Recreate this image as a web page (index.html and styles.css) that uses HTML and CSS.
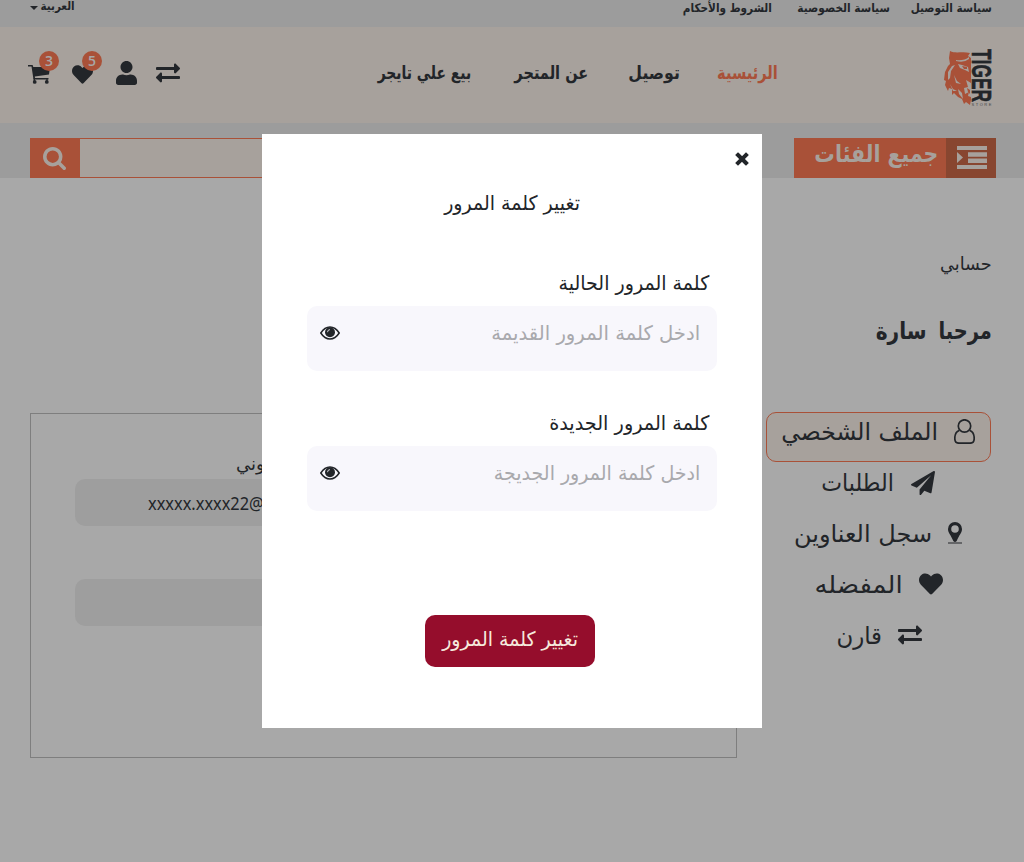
FILE: index.html
```html
<!DOCTYPE html>
<html lang="ar" dir="rtl">
<head>
<meta charset="utf-8">
<title>Tiger Store</title>
<link rel="stylesheet" href="styles.css">
</head>
<body>
<svg class="defs" aria-hidden="true">
  <symbol id="exchange" viewBox="0 0 512 512"><path d="M0 168v-16c0-13.255 10.745-24 24-24h360V80c0-21.367 25.899-32.042 40.971-16.971l80 80c9.372 9.373 9.372 24.569 0 33.941l-80 80C409.956 271.982 384 261.456 384 240v-48H24c-13.255 0-24-10.745-24-24zm488 152H128v-48c0-21.314-25.862-32.08-40.971-16.971l-80 80c-9.372 9.373-9.372 24.569 0 33.941l80 80C102.057 463.997 128 453.437 128 432v-48h360c13.255 0 24-10.745 24-24v-16c0-13.255-10.745-24-24-24z"/></symbol>
  <symbol id="heart" viewBox="0 0 512 512"><path d="M462.3 62.6C407.5 15.9 326 24.3 275.7 76.2L256 96.5l-19.7-20.3C186.1 24.3 104.5 15.9 49.7 62.6c-62.8 53.6-66.1 149.8-9.9 207.9l193.5 199.8c12.5 12.9 32.8 12.9 45.3 0l193.5-199.8c56.3-58.1 53-154.3-9.8-207.9z"/></symbol>
  <symbol id="eye" viewBox="0 0 20 14"><path d="M.8 7Q4.600 1 10 1T19.200 7Q15.400 13 10 13T.8 7Z" fill="none" stroke="currentColor" stroke-width="1.500"/><circle cx="10" cy="6.200" r="5"/><path d="M7.500 6.200Q7.500 3.700 10 3.600" fill="none" stroke="#f8f7fc" stroke-width=".8"/></symbol>
</svg>

<div class="topbar">
  <a class="slot policy-a"><span>سياسة التوصيل</span></a>
  <a class="slot policy-b"><span>سياسة الخصوصية</span></a>
  <a class="slot policy-c"><span>الشروط والأحكام</span></a>
  <a class="lang"><span class="slot lang-name"><span>العربية</span></span><i class="caret"></i></a>
</div>

<header class="header">
  <svg class="logo" viewBox="0 0 48 57">
    <path fill="#a95138" d="M6 2C12 5 18 2 26 4L24 7L27 9V51L26 56L22 53L20 55L18 50L14 48L10 44L8 46L8 40L5 39L4 42L1 36L2 32L0 31L1 23L4 17L6 15L5 9Z"/>
    <path fill="#a7a19c" d="M12 11Q20 12 25 8L25 10Q20 14 12 12ZM14 15L18 16L24 18L25 23L21 21L16 19ZM8 17L11 16L7 22L6 29L4 31L4 23ZM10 26L13 32L17 35L12 34ZM22 31L27 34V48L24 47L25 43L21 45L20 39L24 38ZM6 35L9 40L13 42L9 42ZM14 40L18 44L19 50L15 45Z"/>
    <path fill="#a95138" d="M18 17L23 18V20L20 20ZM23 39L26 41V45L24 43Z"/>
    <text class="logo-name" transform="translate(27.500 0) rotate(90)" textLength="53" lengthAdjust="spacingAndGlyphs">TIGER</text>
    <text class="logo-sub" x="27.500" y="56.500" textLength="20">STORE</text>
  </svg>
  <nav class="nav">
    <a class="slot nav-home"><span>الرئيسية</span></a>
    <a class="slot nav-delivery"><span>توصيل</span></a>
    <a class="slot nav-about"><span>عن المتجر</span></a>
    <a class="slot nav-sell"><span>بيع علي تايجر</span></a>
  </nav>
  <div class="tools">
    <svg class="ic24"><use href="#exchange"/></svg>
    <svg class="ic-user" viewBox="0 0 448 512"><path d="M224 256c70.700 0 128-57.300 128-128S294.700 0 224 0 96 57.300 96 128s57.300 128 128 128zm89.600 32h-16.700c-22.200 10.200-46.900 16-72.900 16s-50.600-5.800-72.900-16h-16.700C60.200 288 0 348.200 0 422.400V464c0 26.500 21.500 48 48 48h352c26.500 0 48-21.500 48-48v-41.600c0-74.200-60.200-134.400-134.400-134.400z"/></svg>
    <span class="tool"><svg class="ic21"><use href="#heart"/></svg><b class="badge">5</b></span>
    <span class="tool cart"><svg class="ic-cart" viewBox="0 0 22 19"><path d="M0 0H4.600L5.300 2H22L21 9.500L6.800 11.500L7 13H20.500V14.600H5.500L3.500 1.600H0Z"/><path d="M6.300 13v3M19 13v3" stroke="currentColor" stroke-width="1.300"/><circle cx="6.700" cy="16.900" r="1.900"/><circle cx="18.800" cy="16.900" r="1.900"/></svg><b class="badge">3</b></span>
  </div>
</header>

<div class="searchbar">
  <div class="categories">
    <span class="cat-icon"><svg viewBox="0 0 30 23"><path d="M0 0h30v4H0zM11 6.300h19v4.400H11zM11 12.500h19v4.400H11zM0 19h30v4H0zM0 6l6 5.500L0 17z"/></svg></span>
    <span class="slot cat-name"><span>جميع الفئات</span></span>
  </div>
  <div class="search">
    <span class="search-btn"><svg viewBox="0 0 1664 1664"><path d="M1152 704q0-185-131.500-316.500T704 256 387.500 387.500 256 704t131.500 316.500T704 1152t316.500-131.500T1152 704zm512 832q0 52-38 90t-90 38q-54 0-90-38l-343-342q-179 124-399 124-143 0-273.500-55.500t-225-150-150-225T0 704t55.500-273.500 150-225 225-150T704 0t273.500 55.500 225 150 150 225T1408 704q0 220-124 399l343 343q37 37 37 90z"/></svg></span>
  </div>
</div>

<main class="account">
  <aside class="side">
    <div class="slot crumb"><span>حسابي</span></div>
    <h1 class="hello"><span class="slot hello-a"><span>مرحبا</span></span><span class="slot hello-b"><span>سارة</span></span></h1>
    <ul class="menu">
      <li class="active"><svg class="ic-usero" viewBox="0 0 21 25"><circle cx="10.500" cy="7" r="6.200"/><path d="M5.200 11.500C2 12.500.8 16 .8 19.500Q.8 24.200 5 24.200H16Q20.200 24.200 20.200 19.500C20.200 16 19 12.500 15.800 11.500"/></svg><span class="slot m-profile"><span>الملف الشخصي</span></span></li>
      <li><svg class="ic24 plane" viewBox="0 0 1792 1792"><path d="M1764 11q33 24 27 64l-256 1536q-5 29-32 45-14 8-31 8-11 0-24-5l-453-185-242 295q-18 23-49 23-13 0-22-4-19-7-30.500-23.500T640 1728v-349l864-1059-1069 925-395-162q-37-14-40-55-2-40 32-59L1696 9q15-9 32-9 20 0 36 11z"/></svg><span class="slot m-orders"><span>الطلبات</span></span></li>
      <li><svg class="ic-pin" viewBox="0 0 14 22"><path fill-rule="evenodd" d="M7 0a7 7 0 0 1 7 7C14 11 11 13 8.700 19Q7 21 5.300 19C3 13 0 11 0 7A7 7 0 0 1 7 0ZM7 3.200a3.800 3.800 0 1 0 0 7.600 3.800 3.800 0 0 0 0-7.600ZM0 20.500h14v1H0Z"/></svg><span class="slot m-addr"><span>سجل العناوين</span></span></li>
      <li><svg class="ic24"><use href="#heart"/></svg><span class="slot m-fav"><span>المفضله</span></span></li>
      <li><svg class="ic24"><use href="#exchange"/></svg><span class="slot m-compare"><span>قارن</span></span></li>
    </ul>
  </aside>
  <section class="panel">
    <div class="panel-label">الإلكتروني</div>
    <div class="panel-field" dir="ltr"><span>xxxxx.xxxx22@</span></div>
    <div class="panel-field second"></div>
  </section>
</main>

<div class="modal" role="dialog">
  <button class="close"><svg viewBox="0 0 14 14"><path d="M3 3l8 8M11 3l-8 8"/></svg></button>
  <h2 class="slot modal-title"><span>تغيير كلمة المرور</span></h2>
  <label class="slot label-old"><span>كلمة المرور الحالية</span></label>
  <div class="field"><span class="slot ph-old"><span>ادخل كلمة المرور القديمة</span></span><svg class="ic-eye"><use href="#eye"/></svg></div>
  <label class="slot label-new"><span>كلمة المرور الجديدة</span></label>
  <div class="field"><span class="slot ph-new"><span>ادخل كلمة المرور الجديجة</span></span><svg class="ic-eye"><use href="#eye"/></svg></div>
  <button class="submit"><span class="slot submit-text"><span>تغيير كلمة المرور</span></span></button>
</div>
</body>
</html>
```
FILE: styles.css
```css
* { box-sizing: border-box; }
html, body { height: 100%; }
body {
  margin: 0;
  overflow: hidden;
  position: relative;
  background: #a8a8a8;
  color: #222529;
  font-family: "DejaVu Sans", sans-serif;
}
svg { display: block; fill: currentColor; flex: none; }
button { border: 0; padding: 0; font: inherit; color: inherit; background: none; }
.defs { position: absolute; width: 0; height: 0; }

/* Fixed-width text box whose label is condensed horizontally */
.slot { display: block; flex: none; white-space: nowrap; }
.slot > span { display: inline-block; transform-origin: right center; }

.topbar {
  display: flex;
  height: 27px;
  padding: 0 32px 0 30px;
  background: #9c9c9c;
  font-size: 12px;
  font-weight: 700;
  line-height: 16px;
}
.policy-a { width: 81px; margin-left: 21px; }
.policy-a > span { transform: scaleX(.874); }
.policy-b { width: 92px; margin-left: 26px; }
.policy-b > span { transform: scaleX(.882); }
.policy-c { width: 89px; }
.policy-c > span { transform: scaleX(.874); }
.lang { display: flex; gap: 3px; margin-right: auto; line-height: 12px; }
.lang-name { width: 34px; }
.lang-name > span { transform: scaleX(.86); }
.caret { margin-top: 6px; height: 4px; border: 4px solid transparent; border-top-color: #222529; border-bottom: 0; }

.header {
  display: flex;
  height: 96px;
  padding: 0 32px 0 28px;
  background: #a7a19c;
}
.logo { width: 48px; height: 57px; margin-top: 22px; direction: ltr; }
.logo-name { font: 700 28px "Liberation Sans", sans-serif; fill: #222529; stroke: #222529; stroke-width: .6; }
.logo-sub { font: 4px "Liberation Sans", sans-serif; fill: #45464a; }
.nav { display: flex; margin-right: 166px; padding-top: 34px; font-size: 18px; font-weight: 700; line-height: 24px; }
.nav-home { width: 60px; margin-left: 38px; color: #a95138; }
.nav-home > span { transform: scaleX(.812); }
.nav-delivery { width: 51px; margin-left: 41px; }
.nav-delivery > span { transform: scaleX(.875); }
.nav-about { width: 73px; margin-left: 44px; }
.nav-about > span { transform: scaleX(.81); }
.nav-sell { width: 93px; }
.nav-sell > span { transform: scaleX(.772); }
.tools { display: flex; align-items: flex-start; margin-right: auto; padding-top: 34px; }
.ic24 { width: 24px; height: 24px; }
.tools .ic24 { margin-left: 19px; }
.ic-user { width: 21px; height: 24px; margin-left: 23px; }
.tool { position: relative; margin-left: 22px; }
.tool.cart { margin-left: 0; }
.ic21 { width: 21px; height: 21px; margin-top: 3px; }
.ic-cart { width: 22px; height: 19px; margin-top: 4px; }
.badge {
  position: absolute;
  top: -10px;
  left: 10px;
  width: 20px;
  height: 20px;
  border-radius: 50%;
  background: #a95138;
  color: #a8a8a8;
  font: 600 14px/20px "Open Sans", sans-serif;
  text-align: center;
}
.cart .badge { left: 11px; }

.searchbar {
  display: flex;
  justify-content: space-between;
  height: 55px;
  padding: 15px 28px 0 30px;
  background: #9c9c9c;
}
.categories { display: flex; width: 202px; background: #a95138; color: #a7a19c; }
.cat-icon { width: 50px; padding: 8px 9px 0 11px; background: #884630; }
.cat-icon svg { width: 30px; height: 23px; }
.cat-name { width: 124px; margin-right: 8px; font-size: 24px; font-weight: 700; line-height: 33px; }
.cat-name > span { transform: scaleX(.853); }
.search { width: 707px; display: flex; justify-content: flex-end; background: #a7a19c; border: 1px solid #a95138; }
.search-btn { display: grid; place-items: center; width: 49px; padding-right: 3px; background: #a95138; color: #a7a19c; }
.search-btn svg { width: 23px; height: 23px; }

.account { display: flex; justify-content: space-between; padding: 0 32px 0 30px; }
.side { width: 226px; }
.crumb { width: 52px; margin-top: 72px; font-size: 18px; line-height: 28px; }
.crumb > span { transform: scaleX(.98); }
.hello { display: flex; gap: 12px; margin: 35px 0 0; font-size: 24px; line-height: 36px; }
.hello-a { width: 53px; }
.hello-a > span { transform: scaleX(.81); }
.hello-b { width: 51px; }
.hello-b > span { transform: scaleX(.84); }
.menu { list-style: none; width: 225px; margin: 63px 1px 0 0; padding: 0; font-size: 24px; line-height: 36px; }
.menu li { display: flex; justify-content: center; gap: 16px; height: 51px; padding-top: 2px; }
.menu li svg { margin-top: 6px; }
.menu li .ic24 { margin-top: 5px; }
.menu li .plane { margin-top: 6px; margin-left: 1px; }
.menu .active {
  height: 50px;
  margin-bottom: 1px;
  padding-top: 1px;
  border: 1px solid #a95138;
  border-radius: 10px;
  background: #a7a19c;
}
.menu .ic-usero { width: 21px; height: 25px; margin-top: 5px; fill: none; stroke: currentColor; stroke-width: 1.700; }
.ic-pin { width: 14px; height: 22px; }
.m-profile { width: 156px; }
.m-profile > span { transform: scaleX(.98); }
.m-orders { width: 72px; }
.m-orders > span { transform: scaleX(.92); }
.m-addr { width: 137px; }
.m-fav { width: 88px; }
.m-fav > span { transform: scaleX(1.080); }
.m-compare { width: 47px; }
.m-compare > span { transform: scaleX(.95); }

.panel { width: 707px; height: 345px; margin-top: 235px; padding: 35px 44px; border: 1px solid #7e7e7e; }
.panel-label { width: 400px; padding-left: 161px; font-size: 18px; line-height: 30px; text-align: left; margin-right: auto; }
.panel-field { width: 300px; height: 47px; margin-right: auto; padding-left: 73px; border-radius: 10px; background: #9e9e9e; font: 18px/49px "Noto Sans", sans-serif; }
.panel-field span { display: inline-block; transform: scaleX(.91); transform-origin: left center; }
.second { margin-top: 53px; }

.modal {
  position: absolute;
  top: 134px;
  left: 262px;
  width: 500px;
  height: 594px;
  padding: 18px 45px 0;
  background: #fff;
  font-size: 20px;
  line-height: 32px;
}
.close { display: block; margin-right: -32px; }
.close svg { width: 14px; height: 14px; stroke: currentColor; stroke-width: 4; stroke-linecap: square; }
.modal-title { width: 136px; margin: 21px 137px 0 0; font: inherit; }
.modal-title > span, .submit-text > span { transform: scaleX(.95); }
.label-old, .label-new { width: 151px; margin-right: 8px; margin-top: 48px; }
.label-old > span { transform: scaleX(.953); }
.label-new > span { transform: scaleX(.963); }
.label-new { margin-top: 36px; }
.field {
  display: flex;
  justify-content: space-between;
  height: 65px;
  margin-top: 7px;
  padding: 11px 17px 0 13px;
  border-radius: 10px;
  background: #f8f7fc;
  color: #a9a9ad;
}
.ph-old > span { transform: scaleX(.98); }
.ph-new > span { transform: scaleX(.95); }
.ic-eye { width: 20px; height: 14px; margin-top: 9px; color: #222529; }
.submit {
  display: block;
  width: 170px;
  height: 52px;
  margin: 104px 122px 0 0;
  padding: 8px 17px 12px;
  border-radius: 10px;
  background: #950d2c;
  color: #f5e9dd;
}
.submit-text { text-align: right; }
```
